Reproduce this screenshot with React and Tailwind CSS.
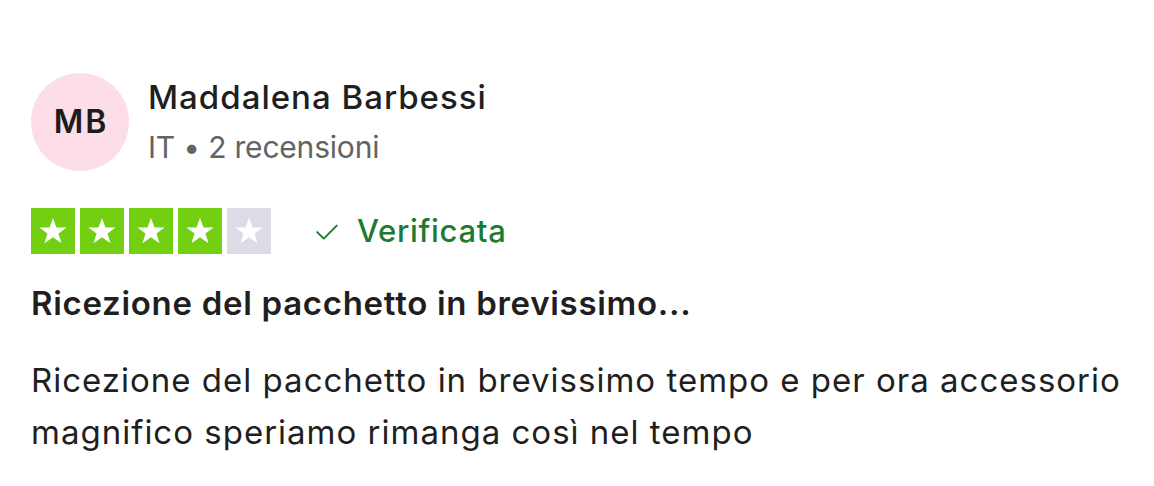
import React from 'react';

const Star = ({ filled }) => (
  <div className={`w-[44px] h-[46px] flex items-center justify-center ${filled ? 'bg-[#73cf11]' : 'bg-[#dcdce6]'}`}>
    <svg viewBox="0 0 24 24" className="w-[32px] h-[32px]" fill="#ffffff">
      <path d="M12 2.2l2.6 7.1h7.6l-6.1 4.5 2.3 7.3L12 16.6l-6.4 4.5 2.3-7.3-6.1-4.5h7.6z" />
    </svg>
  </div>
);

const App = () => {
  return (
    <div className="w-[1154px] h-[486px] bg-white pl-[31px] pt-[72px] text-[#1f1f1f]" style={{ fontFamily: 'Inter, "Liberation Sans", sans-serif' }}>
      {/* Header */}
      <div className="flex items-center gap-[19px]">
        <div className="w-[98px] h-[98px] rounded-full bg-[#fcdde8] flex items-center justify-center pl-[2px] text-[32px] font-semibold tracking-[2px] text-[#1c1c1c]">
          MB
        </div>
        <div className="flex flex-col">
          <div className="text-[33px] font-medium leading-[50px] tracking-[1px]">Maddalena Barbessi</div>
          <div className="text-[30px] leading-[50px] tracking-[-0.2px] text-[#636363]">IT • 2 recensioni</div>
        </div>
      </div>

      {/* Rating */}
      <div className="flex items-center mt-[36px]">
        <div className="flex gap-[5px]">
          <Star filled />
          <Star filled />
          <Star filled />
          <Star filled />
          <Star />
        </div>
        <div className="flex items-center ml-[43px] text-[#1c7b32] text-[31px] font-medium tracking-[0.7px]">
          <svg viewBox="0 0 24 24" className="w-[26px] h-[26px] mr-[17px]" fill="none" stroke="#1c7b32" strokeWidth="1.8" strokeLinecap="round" strokeLinejoin="round">
            <path d="M3 13l6 6L21 7" />
          </svg>
          Verificata
        </div>
      </div>

      {/* Title */}
      <div className="mt-[28px] text-[33px] font-semibold leading-[40px] tracking-[0.7px]">Ricezione del pacchetto in brevissimo...</div>

      {/* Body */}
      <p className="mt-[31px] text-[33px] leading-[52px] tracking-[1px] w-[1115px]">
        Ricezione del pacchetto in brevissimo tempo e per ora accessorio magnifico speriamo rimanga così nel tempo
      </p>
    </div>
  );
};

export default App;
